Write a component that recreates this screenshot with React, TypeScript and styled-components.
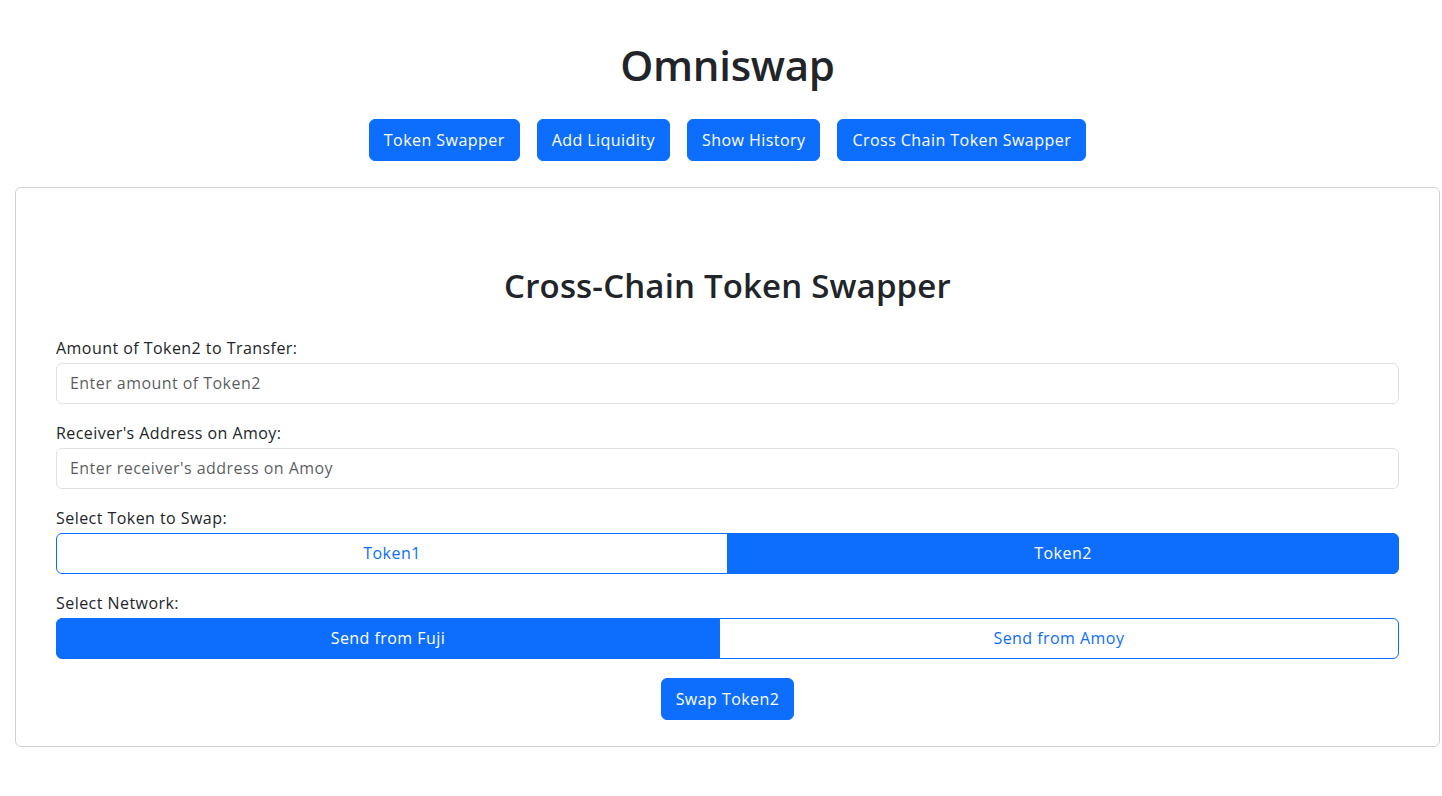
import React, { useState } from "react";
import styled, { createGlobalStyle } from "styled-components";

const GlobalStyle = createGlobalStyle`
  * { box-sizing: border-box; }
  body {
    margin: 0;
    background: #ffffff;
    color: #212529;
    font-family: "Open Sans", "Noto Sans", sans-serif;
    font-size: 16px;
    line-height: 1.5;
    letter-spacing: 0.45px;
  }
`;

const Page = styled.div`
  padding: 0 2px 0 15px;
`;

const Header = styled.header`
  display: flex;
  flex-direction: column;
  align-items: center;
  padding-top: 40px;
`;

const Title = styled.h1`
  margin: 0;
  font-size: 42px;
  font-weight: 600;
  line-height: 1.2;
  letter-spacing: -0.3px;
`;

const Nav = styled.nav`
  display: flex;
  justify-content: center;
  gap: 17px;
  margin-top: 29px;
`;

const Button = styled.button`
  font-family: inherit;
  font-size: 16px;
  line-height: 24px;
  letter-spacing: inherit;
  padding: 8px 14px;
  border: 1px solid #0d6efd;
  border-radius: 6px;
  background: #0d6efd;
  color: #ffffff;
  cursor: pointer;
`;

const Card = styled.section`
  margin-top: 26px;
  border: 1px solid rgba(0, 0, 0, 0.175);
  border-radius: 6px;
  padding: 40px 40px 26px;
`;

const Heading = styled.h2`
  margin: 38px 0 30px;
  text-align: center;
  font-size: 33px;
  font-weight: 600;
  line-height: 1.2;
  letter-spacing: 0.17px;
`;

const Fields = styled.div`
  display: flex;
  flex-direction: column;
  gap: 17px;
`;

const Field = styled.div`
  display: flex;
  flex-direction: column;
  gap: 3px;
`;

const Label = styled.label`
  line-height: 24px;
`;

const Input = styled.input`
  height: 41px;
  width: 100%;
  padding: 0 14px 0 13px;
  font-family: inherit;
  font-size: 16px;
  letter-spacing: inherit;
  color: #212529;
  border: 1px solid #dee2e6;
  border-radius: 6px;
  outline: none;
  &::placeholder {
    color: rgba(33, 37, 41, 0.75);
  }
`;

const Group = styled.div`
  display: flex;
  height: 41px;
`;

const Toggle = styled.button<{ $active: boolean }>`
  flex: 1 1 auto;
  font-family: inherit;
  font-size: 16px;
  line-height: 24px;
  letter-spacing: inherit;
  padding: 0 12px;
  border: 1px solid #0d6efd;
  background: ${(p) => (p.$active ? "#0d6efd" : "#ffffff")};
  color: ${(p) => (p.$active ? "#ffffff" : "#0d6efd")};
  cursor: pointer;
  &:first-child {
    border-radius: 6px 0 0 6px;
  }
  &:last-child {
    border-radius: 0 6px 6px 0;
    margin-left: -1px;
  }
`;

const Actions = styled.div`
  display: flex;
  justify-content: center;
  margin-top: 19px;
`;

export default function App() {
  const [token, setToken] = useState("Token2");
  const [network, setNetwork] = useState("Fuji");
  return (
    <Page>
      <GlobalStyle />
      <Header>
        <Title>Omniswap</Title>
        <Nav>
          <Button>Token Swapper</Button>
          <Button>Add Liquidity</Button>
          <Button>Show History</Button>
          <Button>Cross Chain Token Swapper</Button>
        </Nav>
      </Header>
      <Card>
        <Heading>Cross-Chain Token Swapper</Heading>
        <Fields>
          <Field>
            <Label>Amount of Token2 to Transfer:</Label>
            <Input placeholder="Enter amount of Token2" />
          </Field>
          <Field>
            <Label>Receiver's Address on Amoy:</Label>
            <Input placeholder="Enter receiver's address on Amoy" />
          </Field>
          <Field>
            <Label>Select Token to Swap:</Label>
            <Group>
              <Toggle $active={token === "Token1"} onClick={() => setToken("Token1")}>Token1</Toggle>
              <Toggle $active={token === "Token2"} onClick={() => setToken("Token2")}>Token2</Toggle>
            </Group>
          </Field>
          <Field>
            <Label>Select Network:</Label>
            <Group>
              <Toggle $active={network === "Fuji"} onClick={() => setNetwork("Fuji")}>Send from Fuji</Toggle>
              <Toggle $active={network === "Amoy"} onClick={() => setNetwork("Amoy")}>Send from Amoy</Toggle>
            </Group>
          </Field>
        </Fields>
        <Actions>
          <Button>Swap Token2</Button>
        </Actions>
      </Card>
    </Page>
  );
}
